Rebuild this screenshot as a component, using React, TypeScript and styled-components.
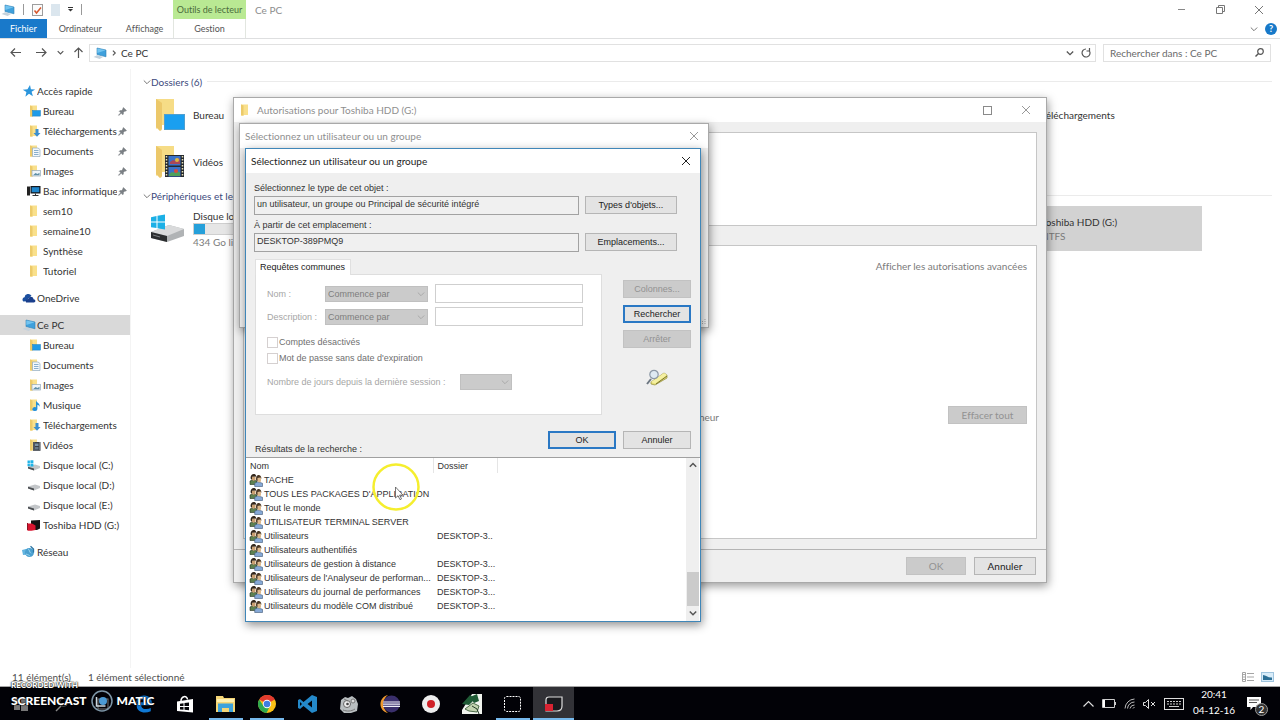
import React from "react";
import styled, { createGlobalStyle, css } from "styled-components";

const UI = `Lato, "Open Sans", sans-serif`;
const CLASSIC = `"Liberation Sans", Arial, sans-serif`;

const Global = createGlobalStyle`
  *, *::before, *::after { box-sizing: border-box; }
  body { margin: 0; background: #fff; color: #333; font: 10px/14px ${UI}; font-variant-ligatures: none; overflow: hidden; }
  button, input, select { font: inherit; font-variant-ligatures: none; color: inherit; margin: 0; padding: 0; border: 0; border-radius: 0; background: none; }
  a { color: inherit; text-decoration: none; }
  svg { display: block; flex: none; overflow: visible; }
`;

/* ---------- icons ---------- */

type IconProps = { size?: number };

const Svg = ({ w, h, vw, vh, children }: { w: number; h: number; vw?: number; vh?: number; children: React.ReactNode }) => (
  <svg width={w} height={h} viewBox={`0 0 ${vw ?? w} ${vh ?? h}`} fill="none" aria-hidden="true">
    {children}
  </svg>
);

const PcIcon = ({ size = 14 }: IconProps) => (
  <Svg w={size} h={size} vw={14} vh={14}>
    <path d="M4 2 13 4v6.800L4 8.600z" fill="#3fa0dc" stroke="#2f7fb4" strokeWidth=".6" />
    <path d="M4.300 2.500 12.600 4.300 4.300 7z" fill="#72c4f0" />
    <path d="M.5 11 4 9.300l6 1.800-3.400 1.800z" fill="#c5d2dc" />
  </Svg>
);

const Folder = ({ children, size = 14 }: IconProps & { children?: React.ReactNode }) => (
  <Svg w={size} h={size} vw={14} vh={14}>
    <path d="M2 1.500h7v10.500H4.500L2 13z" fill="#f9e08c" />
    <path d="M2 1.500 4.500 2.500V13L2 12z" fill="#ecca6a" />
    {children}
  </Svg>
);

const DesktopBadge = <rect x="4.500" y="6.500" width="8" height="5.600" fill="#1e9be8" stroke="#1b7fc0" strokeWidth=".5" />;
const DownBadge = <path d="M7.500 5h3v4h2L9 12.800 5.500 9h2z" fill="#3c8fd0" />;
const DocBadge = (
  <>
    <path d="M4.500 4h5.500l2 1.500v7h-7.500z" fill="#f3f8fc" stroke="#8fa9bd" strokeWidth=".7" />
    <path d="M6 6.500h4.500M6 8.500h4.500M6 10.500h4.500" stroke="#6d9cc2" strokeWidth=".8" />
  </>
);
const ImageBadge = (
  <>
    <rect x="4" y="6.500" width="8.500" height="5.500" fill="#eef5fa" stroke="#94a9b8" strokeWidth=".7" />
    <path d="m5 11.200 2.500-2.200 2 1 2-1.300v2.500z" fill="#5f8fa8" />
  </>
);
const MusicBadge = <path d="M8 2.500c.5 2 4.300 2.700 3.600 6.200-.5-1.300-1.500-1.900-2.200-2v4.300a2.500 2 0 1 1-1.400-1.800z" fill="#2690d8" />;
const VideoBadge = (
  <>
    <rect x="5" y="4" width="7.500" height="8.800" fill="#3a3f47" />
    <path d="M6 4.500v8M11.500 4.500v8" stroke="#c9ced4" strokeWidth=".7" strokeDasharray="1 1" />
    <rect x="7" y="5.500" width="3.500" height="2.500" fill="#7d93a8" />
    <rect x="7" y="9" width="3.500" height="2.500" fill="#68798a" />
  </>
);

const StarIcon = () => (
  <Svg w={14} h={14}>
    <path d="m8 1 .9 4.200 4.300.3-3.600 2.300 1.300 4.400-3.900-2.500-3.600 3 1-4.700L.8 5.800l4.700-.6z" fill="#2b95dc" />
  </Svg>
);
const CloudIcon = () => (
  <Svg w={14} h={14}>
    <path d="M1.300 10.500A2.400 2.400 0 0 1 2.500 6.300a3.800 3.800 0 0 1 7-1.500l-3 2.500-2 3z" fill="#1b4f9f" />
    <path d="M4 11.500c-.8-2.200.5-3.500 2.200-3.500.8-2.900 4.800-2.900 5.300.3 2.400.2 2.600 3.200.3 3.200z" fill="#1a3f8c" />
  </Svg>
);
const TerminalPcIcon = () => (
  <Svg w={14} h={14}>
    <path d="M-1 2.500h3v9h-3z" fill="#222" />
    <rect x="2.500" y="2" width="10" height="7.500" fill="#15191f" />
    <rect x="3.700" y="3.200" width="7.600" height="5" fill="#1f86cc" />
    <path d="M4.500 11.500h6M7.500 9.500v2" stroke="#333" />
  </Svg>
);
const DriveIcon = ({ win }: { win?: boolean }) => (
  <Svg w={14} h={14}>
    <path d="m0 8.500 7-2 5 1.500v2l-6 2.500-6-2z" fill="#c3c6c9" />
    <path d="M0 8.700 6 10.500v2l-6-2z" fill="#4b4f53" />
    {win && <path d="M-.5 2.600h2.400v2.600h-2.400zM2.400 2.300h3v2.900h-3zM-.5 5.700h2.400v2.500h-2.400zM2.400 5.700h3v2.800h-3z" fill="#20b4e8" />}
  </Svg>
);
const ToshibaIcon = () => (
  <Svg w={14} h={14}>
    <path d="M3 2.500 12 2v8.500L9 12H3z" fill="#141414" />
    <path d="M-.5 5.500h4.500l3.500 2v4.500l-4 .8h-4z" fill="#d7152f" />
    <path d="M-.500 5v7" stroke="#8d1322" />
  </Svg>
);
const NetworkIcon = () => (
  <Svg w={14} h={14}>
    <path d="M0 5 6 3.500l.7 6L1 10z" fill="#62b4e0" />
    <circle cx="7.500" cy="7.500" r="4.500" fill="#4a9fcf" />
    <path d="M6 3.800c2 1.500 1 3 3 4.500M4 9c1.800 1 3 .5 4 2.300" stroke="#9ad4ee" />
    <path d="m8.500 1.200 3 2.800v3.500" stroke="#2c75a3" strokeWidth="1.300" />
  </Svg>
);
const PinIcon = () => (
  <Svg w={9} h={9} vw={10} vh={10}>
    <path d="M6 .5 9.500 4l-1 .6-.8-.1-1.700 1.700.1 1.600-.9.900L3.500 7 1 9.500.5 9 3 6.500 1.300 4.800l.9-.9 1.600.1 1.700-1.700-.1-.8z" fill="#7b8085" stroke="#7b8085" strokeWidth=".5" />
  </Svg>
);
const BigFolder = ({ children }: { children?: React.ReactNode }) => (
  <Svg w={34} h={36}>
    <path d="M3 2h18v26H8l-5 4z" fill="#f6dc86" />
    <path d="m3 2 6 4v26l-2 2-4-4z" fill="#f1cf70" />
    <path d="m3 2 6 4v27l-2 1-4-4z" fill="#e7c263" opacity=".5" />
    {children}
  </Svg>
);
const BigDrive = ({ win }: { win?: boolean }) => (
  <Svg w={34} h={30}>
    <path d="m-2 18 18-7 15 4v7l-17 6-16-4z" fill="#b0b3b5" />
    <path d="m-2 18 18-7 15 4-17 7z" fill="#d9dadb" />
    <path d="m-2 18 16 4v6L-2 24z" fill="#2c2e30" />
    <path d="m0 21 7 2" stroke="#7b7f83" />
    {win && <path d="M-2 3.200 3.500 2v5.500H-2zM4.500 1.800 12 .5v7H4.500zM-2 8.500h5.500V14L-2 13.300zM4.500 8.500H12v7l-7.500-1.300z" fill="#1cb0e6" />}
  </Svg>
);
const Chevron = ({ dir = "down", size = 8, color = "#555", width = 1 }: { dir?: "down" | "up" | "right"; size?: number; color?: string; width?: number }) => (
  <Svg w={size} h={size} vw={8} vh={8}>
    <path d={dir === "down" ? "M.8 2.500 4 5.700l3.200-3.200" : dir === "up" ? "M.8 5.700 4 2.500l3.200 3.200" : "M2.500.8 5.700 4 2.500 7.200"} stroke={color} strokeWidth={width} />
  </Svg>
);
const CloseX = ({ color = "#999" }: { color?: string }) => (
  <Svg w={8} h={8}>
    <path d="m0 0 8 8M8 0 0 8" stroke={color} />
  </Svg>
);
const Square = ({ color = "#8a8a8a" }: { color?: string }) => (
  <Svg w={9} h={9}>
    <rect x=".5" y=".5" width="8" height="8" stroke={color} />
  </Svg>
);
const Arrow = ({ dir, color = "#555" }: { dir: "left" | "right" | "up"; color?: string }) => (
  <Svg w={11} h={11}>
    <path d={dir === "left" ? "M11 5.500H1M5 1.500l-4 4 4 4" : dir === "right" ? "M0 5.500h10M6 1.500l4 4-4 4" : "M5.500 11V1M1.500 5l4-4 4 4"} stroke={color} strokeWidth="1.200" />
  </Svg>
);
const GroupIcon = () => (
  <Svg w={13} h={14}>
    <path d="M0 11.500V8l2.500-1.200L7 8v3.500z" fill="#5d8050" stroke="#243020" strokeWidth=".6" />
    <path d="M1.500 3.500h4v3.300L3.500 8 1.500 6.500z" fill="#c99f70" />
    <path d="M.6 5.500C0-.3 6.600-.3 6.300 4L5.500 3.500 2 3.800v3z" fill="#33271c" />
    <path d="M4.700 13.500v-3.200l3-1.500 4.800 1.500v3.200z" fill="#86a9d6" stroke="#3f5877" strokeWidth=".6" />
    <path d="M7 4.500h4v4L9 9.500 7 8z" fill="#dcb88c" />
    <path d="M6.200 7.500C5 .5 11.700.5 11.400 6L10.500 4.500 7.500 5v3z" fill="#4a3622" />
  </Svg>
);
const SearchBookIcon = () => (
  <Svg w={24} h={18}>
    <path d="m6 14 13-9 3 2v3L10 17l-4-1z" fill="#e9e27a" stroke="#8f8a3a" strokeWidth=".7" />
    <path d="m6 14 13-9 3 2-12 8.500z" fill="#f5f0a2" />
    <path d="M11 16 22 8" stroke="#77722f" />
    <path d="m6 11-4 5" stroke="#6c7681" strokeWidth="2" />
    <circle cx="9" cy="6.500" r="4.200" fill="#dbe7f2" fillOpacity=".85" stroke="#8c98a6" strokeWidth="1.200" />
  </Svg>
);

/* ---------- explorer ---------- */

const Desktop = styled.div`
  position: relative;
  display: flex;
  flex-direction: column;
  height: 100vh;
  overflow: hidden;
`;
const Explorer = styled.main`
  flex: 1;
  min-height: 0;
  display: flex;
  flex-direction: column;
  border-bottom: 1px solid #a5a5a5;
`;
const Ribbon = styled.header`
  display: grid;
  grid-template-columns: 173px 73px 1fr;
  grid-template-rows: 19px 19px;
  border-bottom: 1px solid #dedfe0;
  font-size: 9px;
`;
const QuickAccess = styled.div`
  display: flex;
  align-items: center;
  gap: 8px;
  padding-left: 1px;
`;
const QuickSep = styled.span`
  width: 1px;
  height: 11px;
  background: #999;
`;
const ContextTab = styled.div`
  background: #b9e993;
  color: #4b6b3c;
  text-align: center;
  line-height: 19px;
`;
const TitleArea = styled.div`
  display: flex;
  align-items: center;
  justify-content: space-between;
  padding: 0 17px 0 9px;
  font-size: 10px;
  color: #8d8d8d;
`;
const Controls = styled.div`
  display: flex;
  align-items: center;
  gap: 30px;
`;
const IconButton = styled.button`
  display: grid;
  place-items: center;
  cursor: pointer;
`;
const Tabs = styled.div`
  display: flex;
`;
const Tab = styled.button<{ $file?: boolean; $context?: boolean }>`
  padding: 0 ${(p) => (p.$file ? 10 : p.$context ? 0 : 12)}px;
  line-height: 19px;
  color: ${(p) => (p.$file ? "#fff" : "#555")};
  background: ${(p) => (p.$file ? "#1979ca" : "none")};
  ${(p) => p.$context && css`border: solid #e2e6e0; border-width: 0 1px;`}
`;
const TabEnd = styled.div`
  display: flex;
  align-items: center;
  justify-content: flex-end;
  gap: 7px;
  padding-right: 3px;
`;
const Help = styled.button`
  width: 12px;
  height: 12px;
  border-radius: 50%;
  background: #1779c9;
  color: #fff;
  font-weight: bold;
  line-height: 12px;
`;
const AddressRow = styled.div`
  display: flex;
  align-items: center;
  padding: 0 9px 3px 10px;
  height: 30px;
`;
const NavButtons = styled.div`
  display: grid;
  grid-template-columns: 26px 21px 16px 16px;
  align-items: center;
  justify-items: start;
`;
const Address = styled.div`
  flex: 1;
  display: flex;
  align-items: center;
  gap: 4px;
  height: 18px;
  padding: 0 4px 0 3px;
  border: 1px solid #e1e1e1;
  margin-right: 7px;
`;
const Crumb = styled.button`
  flex: 1;
  text-align: left;
`;
const AddressTools = styled.div`
  display: flex;
  align-items: center;
  gap: 7px;
`;
const SearchBox = styled.label`
  display: flex;
  align-items: center;
  width: 168px;
  height: 18px;
  padding: 0 6px;
  border: 1px solid #e1e1e1;
  input { flex: 1; min-width: 0; outline: 0; }
  input::placeholder { color: #6a6a6a; opacity: 1; }
`;
const Columns = styled.div`
  flex: 1;
  display: flex;
  min-height: 0;
`;
const NavPane = styled.nav`
  width: 131px;
  padding-top: 12px;
  border-right: 1px solid #f4f4f4;
  display: flex;
  flex-direction: column;
  gap: 7px;
`;
const NavItem = styled.a<{ $level: number; $selected?: boolean }>`
  display: flex;
  align-items: center;
  gap: 1px;
  height: 20px;
  padding: 0 3px 0 ${(p) => (p.$level ? 28 : 22)}px;
  background: ${(p) => (p.$selected ? "#d9d9d9" : "none")};
  span { flex: 1; min-width: 0; overflow: hidden; white-space: nowrap; }
`;
const Content = styled.section`
  flex: 1;
  min-width: 0;
  padding: 4px 8px 0;
`;
const GroupHeader = styled.h2`
  display: flex;
  align-items: center;
  margin: 0;
  padding-left: 4px;
  height: 17px;
  font-size: 10px;
  font-weight: normal;
  color: #3c4a7c;
  &::after { content: ""; flex: 1; height: 1px; margin-left: 5px; background: #ebebeb; }
`;
const Tiles = styled.div<{ $drives?: boolean }>`
  display: grid;
  grid-template-columns: repeat(auto-fill, 204px);
  column-gap: 8px;
  padding: 0 11px;
  row-gap: 2px;
  margin: ${(p) => (p.$drives ? "2px 0 0" : "2px 0 3px")};
`;
const Tile = styled.a<{ $selected?: boolean }>`
  display: flex;
  align-items: center;
  gap: 6px;
  height: 45px;
  padding-left: 3px;
  background: ${(p) => (p.$selected ? "#d2d2d2" : "none")};
`;
const DriveInfo = styled.div`
  display: flex;
  flex-direction: column;
  small { font-size: 10px; color: #7b7b7b; }
`;
const Usage = styled.div`
  width: 150px;
  height: 12px;
  background: linear-gradient(to right, #26a0da 11px, #e6e6e6 11px);
  border: 1px solid #cfcfcf;
`;
const StatusBar = styled.footer`
  display: flex;
  align-items: center;
  gap: 17px;
  height: 18px;
  padding: 0 6px 0 12px;
  color: #4e4e4e;
`;
const Views = styled.div`
  display: flex;
  gap: 7px;
  margin-left: auto;
`;

/* ---------- taskbar ---------- */

const Taskbar = styled.footer`
  display: flex;
  height: 33px;
  background: #020207;
  color: #fff;
`;
const TaskButton = styled.button<{ $state?: "open" | "active" }>`
  display: grid;
  place-items: center;
  width: 41px;
  ${(p) => p.$state && css`background: linear-gradient(#76b9ed, #76b9ed) bottom / ${p.$state === "active" ? "41px" : "34px"} 2px no-repeat ${p.$state === "active" ? "#323237" : "transparent"};`}
`;
const Tray = styled.div`
  display: flex;
  align-items: center;
  gap: 8px;
  margin-left: auto;
  padding-right: 10px;
`;
const Clock = styled.time`
  width: 44px;
  margin-bottom: 4px;
  text-align: center;
  line-height: 16px;
`;
const Notifications = styled.button`
  position: relative;
  width: 26px;
  height: 33px;
  padding: 0 3px;
  display: grid;
  align-items: center;
`;
const Count = styled.span`
  position: absolute;
  right: 2px;
  bottom: 4px;
  width: 13px;
  height: 13px;
  border-radius: 50%;
  border: 1px solid #999;
  background: #333;
  line-height: 11px;
  text-align: center;
`;
const Watermark = styled.div`
  position: absolute;
  left: 11px;
  bottom: 7px;
  color: #fff;
  font-weight: 900;
  text-shadow: 0 0 2px #000, 0 0 1px #000;
  pointer-events: none;
`;
const WatermarkTop = styled.div`
  font-size: 8px;
  line-height: 8px;
`;
const WatermarkName = styled.div`
  display: flex;
  align-items: center;
  gap: 3px;
  font-size: 12px;
  line-height: 24px;
`;

/* ---------- dialogs ---------- */

const Dialog = styled.section<{ $x: number; $y: number; $w: number; $h: number; $active?: boolean }>`
  position: absolute;
  left: ${(p) => p.$x}px;
  top: ${(p) => p.$y}px;
  width: ${(p) => p.$w}px;
  height: ${(p) => p.$h}px;
  display: flex;
  flex-direction: column;
  background: #efefef;
  border: 1px solid ${(p) => (p.$active ? "#3f86b8" : "#a9a9a9")};
  box-shadow: 1px 3px 9px rgba(0, 0, 0, ${(p) => (p.$active ? 0.45 : 0.4)});
`;
const TitleBar = styled.header<{ $active?: boolean; $large?: boolean }>`
  display: flex;
  align-items: center;
  gap: 4px;
  height: 24px;
  padding: 0 ${(p) => (p.$large ? 16 : 10)}px 0 5px;
  background: #fff;
  color: ${(p) => (p.$active ? "#222" : "#8f8f8f")};
  h1 { flex: 1; margin: 0; font-size: 10px; font-weight: normal; }
`;
const PermTop = styled.div`
  height: 94px;
  margin: 10px 9px 0;
  background: #fff;
  border: 1px solid #c6c6c6;
`;
const PermPanel = styled.div`
  flex: 1;
  display: flex;
  flex-direction: column;
  justify-content: space-between;
  align-items: flex-end;
  margin: 19px 9px 10px;
  padding: 13px 9px 114px;
  background: #fff;
  border: 1px solid #c6c6c6;
`;
const PermLink = styled.a`
  color: #7b7b7b;
`;
const PermLine = styled.div`
  display: grid;
  grid-template-columns: 466px auto;
  align-items: end;
  justify-content: space-between;
  width: 100%;
  color: #7b7b7b;
  span { text-align: right; }
`;
const DialogFooter = styled.footer`
  display: flex;
  justify-content: flex-end;
  align-items: center;
  gap: 8px;
  height: 33px;
  padding: 0 10px;
  border-top: 1px solid #b4b4b4;
`;
const Button = styled.button<{ $w: number; $focus?: boolean }>`
  width: ${(p) => p.$w}px;
  height: 18px;
  background: #e3e3e3;
  border: ${(p) => (p.$focus ? "2px solid #2a78c4" : "1px solid #b5b5b5")};
  color: #222;
  &:disabled { background: #cbcbcb; border-color: #c2c2c2; color: #929292; }
`;
const Grip = styled.div`
  margin: auto 2px 2px auto;
`;
const Form = styled.form`
  flex: 1;
  display: flex;
  flex-direction: column;
  padding-top: 9px;
  font: 9px/12px ${CLASSIC};
  color: #333;
`;
const Target = styled.div`
  display: grid;
  grid-template-columns: 325px 92px;
  column-gap: 6px;
  margin: 0 0 4px 8px;
  label { grid-column: 1 / -1; height: 14px; line-height: 12px; }
`;
const ReadOnly = styled.input`
  height: 19px;
  padding: 0 2px 3px;
  border: 1px solid #a2a2a2;
  background: #f0f0f0;
`;
const Middle = styled.div`
  display: flex;
  align-items: flex-start;
  margin-top: 3px;
  padding: 0 9px;
  justify-content: space-between;
`;
const QueryTab = styled.div`
  width: 96px;
  height: 16px;
  margin-bottom: -1px;
  padding-left: 4px;
  line-height: 14px;
  background: #fff;
  border: 1px solid #e0e0e0;
  border-bottom: 0;
  position: relative;
  color: #222;
`;
const QueryPanel = styled.fieldset`
  display: flex;
  flex-direction: column;
  width: 347px;
  height: 141px;
  margin: 0;
  padding: 9px 11px 0;
  background: #fff;
  border: 1px solid #dedede;
  color: #a6a6a6;
`;
const QueryRow = styled.div`
  display: grid;
  grid-template-columns: 58px 110px 148px;
  align-items: center;
  height: 19px;
  margin-bottom: 4px;
`;
const SelectBox = styled.span<{ $w: number }>`
  position: relative;
  display: block;
  width: ${(p) => p.$w}px;
  select {
    appearance: none;
    display: block;
    width: 100%;
    height: 16px;
    padding: 0 2px;
    background: #cbcbcb;
    border: 1px solid #c0c0c0;
    color: #7d7d7d;
    opacity: 1;
  }
  svg { position: absolute; right: 3px; top: 4px; }
`;
const TextInput = styled.input`
  width: 148px;
  height: 19px;
  border: 1px solid #cfcfcf;
  background: #fff;
`;
const CheckRow = styled.label`
  display: flex;
  align-items: center;
  gap: 1px;
  height: 16px;
  color: #6f6f6f;
  input { appearance: none; width: 11px; height: 11px; border: 1px solid #d5d0d0; background: #fff; }
`;
const Checks = styled.div`
  margin-top: 4px;
`;
const SessionRow = styled.div`
  display: flex;
  align-items: center;
  justify-content: space-between;
  width: 245px;
  margin-top: 8px;
`;
const SideButtons = styled.div`
  display: flex;
  flex-direction: column;
  align-items: center;
  gap: 7px;
  padding-top: 21px;
`;
const SideArt = styled.div`
  padding-top: 13px;
`;
const Actions = styled.div`
  display: flex;
  justify-content: flex-end;
  gap: 7px;
  margin-top: 16px;
  padding: 0 9px;
`;
const ResultsLabel = styled.div`
  margin-top: -6px;
  padding: 0 9px;
  height: 14px;
  line-height: 12px;
`;
const Results = styled.div`
  flex: 1;
  display: flex;
  justify-content: space-between;
  background: #fff;
  border-top: 1px solid #a0a0a0;
`;
const Table = styled.table`
  table-layout: fixed;
  width: 251px;
  align-self: flex-start;
  border-collapse: collapse;
  th, td { height: 14px; padding: 0 4px; line-height: 14px; text-align: left; font-weight: normal; white-space: nowrap; overflow: hidden; }
  th { height: 15px; border-right: 1px solid #e5e5e5; }
  td { padding-right: 0; }
`;
const NameCell = styled.span`
  display: flex;
  align-items: center;
  gap: 1px;
  height: 14px;
`;
const Scrollbar = styled.div`
  display: flex;
  flex-direction: column;
  align-items: center;
  justify-content: space-between;
  width: 13px;
  margin-right: 1px;
  padding: 3px 0 4px;
  background: #efefef;
`;
const Thumb = styled.div`
  width: 12px;
  height: 34px;
  margin: auto 0 3px;
  background: #cbcbcb;
`;
const Pointer = styled.div`
  position: absolute;
  left: 372px;
  top: 463px;
  width: 48px;
  height: 48px;
  pointer-events: none;
`;

/* ---------- data ---------- */

type NavEntry = { label: string; icon: React.ReactNode; level?: number; pinned?: boolean; selected?: boolean };

const nav: NavEntry[][] = [
  [
    { label: "Accès rapide", icon: <StarIcon />, level: 0 },
    { label: "Bureau", icon: <Folder>{DesktopBadge}</Folder>, pinned: true },
    { label: "Téléchargements", icon: <Folder>{DownBadge}</Folder>, pinned: true },
    { label: "Documents", icon: <Folder>{DocBadge}</Folder>, pinned: true },
    { label: "Images", icon: <Folder>{ImageBadge}</Folder>, pinned: true },
    { label: "Bac informatique", icon: <TerminalPcIcon />, pinned: true },
    { label: "sem10", icon: <Folder /> },
    { label: "semaine10", icon: <Folder /> },
    { label: "Synthèse", icon: <Folder /> },
    { label: "Tutoriel", icon: <Folder /> },
  ],
  [{ label: "OneDrive", icon: <CloudIcon />, level: 0 }],
  [
    { label: "Ce PC", icon: <PcIcon />, level: 0, selected: true },
    { label: "Bureau", icon: <Folder>{DesktopBadge}</Folder> },
    { label: "Documents", icon: <Folder>{DocBadge}</Folder> },
    { label: "Images", icon: <Folder>{ImageBadge}</Folder> },
    { label: "Musique", icon: <Folder>{MusicBadge}</Folder> },
    { label: "Téléchargements", icon: <Folder>{DownBadge}</Folder> },
    { label: "Vidéos", icon: <Folder>{VideoBadge}</Folder> },
    { label: "Disque local (C:)", icon: <DriveIcon win /> },
    { label: "Disque local (D:)", icon: <DriveIcon /> },
    { label: "Disque local (E:)", icon: <DriveIcon /> },
    { label: "Toshiba HDD (G:)", icon: <ToshibaIcon /> },
  ],
  [{ label: "Réseau", icon: <NetworkIcon />, level: 0 }],
];

const results: [string, string][] = [
  ["TACHE", ""],
  ["TOUS LES PACKAGES D'APPLICATION", ""],
  ["Tout le monde", ""],
  ["UTILISATEUR TERMINAL SERVER", ""],
  ["Utilisateurs", "DESKTOP-3.."],
  ["Utilisateurs authentifiés", ""],
  ["Utilisateurs de gestion à distance", "DESKTOP-3..."],
  ["Utilisateurs de l'Analyseur de performan...", "DESKTOP-3..."],
  ["Utilisateurs du journal de performances", "DESKTOP-3..."],
  ["Utilisateurs du modèle COM distribué", "DESKTOP-3..."],
];

const folders: { label: string; art?: React.ReactNode }[] = [
  { label: "Bureau", art: <rect x="11.500" y="17.500" width="20" height="15" fill="#1a9ff0" stroke="#4f9fd0" /> },
  { label: "Documents" },
  { label: "Images" },
  { label: "Musique" },
  { label: "Téléchargements" },
  {
    label: "Vidéos",
    art: (
      <>
        <rect x="12" y="11" width="19" height="22" fill="#25292e" />
        <path d="M13.500 12v21M29.500 12v21" stroke="#e8e2b8" strokeWidth="1.500" strokeDasharray="1.500 1.500" />
        <rect x="15.500" y="12" width="12" height="9.500" fill="#3a72c8" />
        <rect x="15.500" y="23" width="12" height="9.500" fill="#3a72c8" />
        <path d="m17 18 3-2 3 1 3-3 1 3v3H17z" fill="#a8475a" />
        <circle cx="24" cy="16" r="2" fill="#e0b83c" />
        <path d="M16 31c3-5 5-1 7-3s3 1 4 0v4H16z" fill="#4fa05a" />
        <circle cx="23" cy="27" r="2" fill="#d84b3a" />
      </>
    ),
  },
];

const tasks: { name: string; state?: "open" | "active"; icon: React.ReactNode }[] = [
  { name: "Démarrer", icon: <Svg w={14} h={14}><path d="M0 2h6v5H0zM7 1h7v6H7zM0 8h6v5H0zM7 8h7v6H7z" fill="#777" /></Svg> },
  { name: "Rechercher", icon: <Svg w={14} h={14}><circle cx="8.500" cy="5.500" r="4" stroke="#555" /><path d="M6 9 1 14" stroke="#888" strokeWidth="1.500" /></Svg> },
  { name: "Vue des tâches", icon: <Svg w={14} h={14}><rect x="2" y="2" width="10" height="10" stroke="#777" /></Svg> },
  { name: "Edge", icon: <Svg w={18} h={18} vw={16} vh={16}><path d="M1 8C1 3 4 .5 8 .5c5 0 7.500 3.500 7 8.500H5.500c0 3.500 5 4.500 8.500 2.500v3C8 17 1.500 15 1.500 9.500 1.500 7 3 5 5.500 4 4.500 5 4.500 6 4.500 6.500h6.500C11 3 4 2.500 1 8z" fill="#0f78d4" /></Svg> },
  { name: "Store", icon: <Svg w={18} h={18}><path d="M1 6.500 17 4v13.500L1 16z" fill="#fff" /><path d="M5 6c0-5 6-6 6.500-1.500" stroke="#fff" strokeWidth="1.500" /><path d="M4 8.700 7.500 8.200v2.800H4zM8.500 8 13 7.400V11H8.500zM4 12h3.500v2.700L4 14.400zM8.500 12H13v3.200l-4.500-.4z" fill="#050508" /></Svg> },
  { name: "Explorateur", state: "open", icon: <Svg w={19} h={16}><path d="M0 0h7l1 2h11v14H0z" fill="#f5d677" /><path d="M1 3h17v3H1z" fill="#fff0b0" /><path d="M2 7.500h15V16h-4v-4H6v4H2z" fill="#3da2dc" /></Svg> },
  { name: "Chrome", state: "open", icon: <Svg w={18} h={18}><circle cx="9" cy="9" r="9" fill="#fbc116" /><path d="M9 9 1.200 4.500A9 9 0 0 1 16.800 4.500z" fill="#e33b2e" /><path d="M9 0a9 9 0 0 1 7.800 4.500H9z" fill="#e33b2e" /><path d="M1.200 4.500A9 9 0 0 0 8.500 18L12 11 5.500 11z" fill="#2da94f" /><circle cx="9" cy="9" r="4.200" fill="#fff" /><circle cx="9" cy="9" r="3.300" fill="#3e7de0" /></Svg> },
  { name: "Visual Studio Code", icon: <Svg w={19} h={18}><path fillRule="evenodd" d="M14 0l5 2v14l-5 2-8.500-7L2 14l-2-1V5l2-1 3.500 3zM14 5.500 9.500 9l4.500 3.500zM2 7v4l2-2z" fill="#2489ca" /></Svg> },
  { name: "Moteur", icon: <Svg w={20} h={18}><path d="M2 5 6 2l3 1 4-2 4 3 2 5-1 7-6 2H5l-4-4z" fill="#b9bec0" /><circle cx="8" cy="9" r="3.500" fill="#eee" stroke="#666" /><circle cx="14" cy="6" r="2" fill="#ddd" stroke="#777" /><path d="M4 15c4 1.500 8 1.500 12-1M5 4l4 2" stroke="#777" /><circle cx="8.500" cy="9" r="1.300" fill="#444" /></Svg> },
  { name: "Eclipse", icon: <Svg w={20} h={18}><path d="M8 0C-2 2-2 16 8 18 2 14 2 4 8 0z" fill="#f09a30" /><circle cx="11.500" cy="9" r="8.500" fill="#3a2f6b" /><path d="M3 7h17M3 9.200h17M3 11.400h17" stroke="#eeeef8" strokeWidth="1.200" /></Svg> },
  { name: "Enregistreur", icon: <Svg w={18} h={18}><circle cx="9" cy="9" r="9" fill="#ededed" /><circle cx="9" cy="9" r="4" fill="#cf2027" /></Svg> },
  { name: "Notepad", icon: <Svg w={20} h={20}><path d="M10 0h10v20H0v-4z" fill="#f1f4ee" /><path d="m0 10 8-9 5 4-6 6zM8 3l7-3 2 7-5 2z" fill="#1f5a35" /><path d="m3 15 8-6 6 3-2 6-8-1z" fill="#c2d4b0" stroke="#4c6a48" /><path d="m10 12 5 3 2 5" stroke="#263c28" /></Svg> },
  { name: "Capture", state: "open", icon: <Svg w={17} h={16}><rect x=".5" y=".5" width="16" height="15" rx="2" stroke="#fff" strokeDasharray="2 1" /></Svg> },
  { name: "Screencast-O-Matic", state: "active", icon: <Svg w={19} h={16}><path d="M5 1h13v9q0 5-5 5H2V4q0-3 3-3z" fill="#1b1b1f" stroke="#ddd" strokeWidth="1.200" /><rect x="1" y="8" width="8" height="7" fill="#d92332" /></Svg> },
];

/* ---------- views ---------- */

const ExplorerWindow = () => (
  <Explorer>
    <Ribbon>
      <QuickAccess>
        <PcIcon />
        <QuickSep />
        <Svg w={11} h={12}><rect x=".5" y=".5" width="10" height="11" fill="#fbfbfb" stroke="#9d9d9d" /><path d="m2.500 6.500 2 2.500L9 3.500" stroke="#d8582d" strokeWidth="1.500" /></Svg>
        <Svg w={9} h={12}><rect width="9" height="12" fill="#dbe6ee" /></Svg>
        <Svg w={5} h={5}><path d="M0 .5h5" stroke="#333" /><path d="M0 2h5L2.500 4.500z" fill="#333" /></Svg>
        <QuickSep />
      </QuickAccess>
      <ContextTab>Outils de lecteur</ContextTab>
      <TitleArea>
        <span>Ce PC</span>
        <Controls>
          <IconButton aria-label="Réduire"><Svg w={9} h={9}><path d="M1 4.500h7" stroke="#888" /></Svg></IconButton>
          <IconButton aria-label="Agrandir"><Svg w={9} h={9}><path d="M.5 2.500h6v6h-6zM2.500 2.500v-2h6v6h-2" stroke="#777" /></Svg></IconButton>
          <IconButton aria-label="Fermer"><CloseX color="#777" /></IconButton>
        </Controls>
      </TitleArea>
      <Tabs>
        <Tab $file>Fichier</Tab>
        <Tab>Ordinateur</Tab>
        <Tab>Affichage</Tab>
      </Tabs>
      <Tab $context>Gestion</Tab>
      <TabEnd>
        <IconButton aria-label="Développer le ruban"><Chevron color="#777" /></IconButton>
        <Help aria-label="Aide">?</Help>
      </TabEnd>
    </Ribbon>
    <AddressRow>
      <NavButtons>
        <IconButton aria-label="Précédent"><Arrow dir="left" /></IconButton>
        <IconButton aria-label="Suivant"><Arrow dir="right" /></IconButton>
        <IconButton aria-label="Récents"><Chevron size={7} width={1.3} /></IconButton>
        <IconButton aria-label="Dossier parent"><Arrow dir="up" /></IconButton>
      </NavButtons>
      <Address>
        <PcIcon />
        <Chevron dir="right" size={6} width={1.5} />
        <Crumb>Ce PC</Crumb>
        <AddressTools>
          <IconButton aria-label="Historique"><Chevron width={1.3} /></IconButton>
          <IconButton aria-label="Actualiser"><Svg w={10} h={10}><path d="M8.500 3A4 4 0 1 1 5 1M8.500 0v3h-3" stroke="#555" strokeWidth="1.200" /></Svg></IconButton>
        </AddressTools>
      </Address>
      <SearchBox>
        <input aria-label="Rechercher" placeholder="Rechercher dans : Ce PC" />
        <Svg w={9} h={9}><circle cx="5.500" cy="3.500" r="2.800" stroke="#555" strokeWidth="1.200" /><path d="M3.500 5.500.5 8.500" stroke="#555" strokeWidth="1.500" /></Svg>
      </SearchBox>
    </AddressRow>
    <Columns>
      <NavPane aria-label="Volet de navigation">
        {nav.map((group, i) => (
          <div key={i}>
            {group.map((n) => (
              <NavItem key={n.label} href="#" $level={n.level ?? 1} $selected={n.selected}>
                {n.icon}
                <span>{n.label}</span>
                {n.pinned && <PinIcon />}
              </NavItem>
            ))}
          </div>
        ))}
      </NavPane>
      <Content>
        <GroupHeader><Chevron color="#777" />Dossiers (6)</GroupHeader>
        <Tiles>
          {folders.map((f) => (
            <Tile key={f.label} href="#"><BigFolder>{f.art}</BigFolder>{f.label}</Tile>
          ))}
        </Tiles>
        <GroupHeader><Chevron color="#777" />Périphériques et lecteurs (5)</GroupHeader>
        <Tiles $drives>
          <Tile href="#">
            <BigDrive win />
            <DriveInfo>Disque local<Usage /><small>434 Go libres</small></DriveInfo>
          </Tile>
          {["D", "E", "F"].map((d) => (
            <Tile key={d} href="#" aria-label={`Disque local (${d}:)`}>
              <BigDrive />
              <Usage />
            </Tile>
          ))}
          <Tile href="#" $selected>
            <BigDrive />
            <DriveInfo>Toshiba HDD (G:)<small>NTFS</small></DriveInfo>
          </Tile>
        </Tiles>
      </Content>
    </Columns>
    <StatusBar>
      <span>11 élément(s)</span>
      <span>1 élément sélectionné</span>
      <Views>
        <IconButton aria-label="Détails"><Svg w={12} h={10}><path d="M.5.500h3v9h-3zM5 1.500h7M5 5h7M5 8.500h7" stroke="#a5a5a5" /><path d="M1.500 2.500h1M1.500 5h1M1.500 7.500h1" stroke="#555" /></Svg></IconButton>
        <IconButton aria-label="Grandes icônes"><Svg w={13} h={10}><rect x=".5" y=".5" width="12" height="9" fill="#d8ecf9" stroke="#9fc4de" /><path d="M2 3c3 0 5 3 9 2.500V8H2z" fill="#2c6f96" /></Svg></IconButton>
      </Views>
    </StatusBar>
  </Explorer>
);

const PermissionsDialog = () => (
  <Dialog $x={233} $y={97} $w={814} $h={486} aria-label="Autorisations">
    <TitleBar $large>
      <Folder />
      <h1>Autorisations pour Toshiba HDD (G:)</h1>
      <Controls>
        <IconButton aria-label="Agrandir"><Square /></IconButton>
        <IconButton aria-label="Fermer"><CloseX /></IconButton>
      </Controls>
    </TitleBar>
    <PermTop />
    <PermPanel>
      <PermLink href="#">Afficher les autorisations avancées</PermLink>
      <PermLine>
        <span>conteneur</span>
        <Button $w={79} disabled>Effacer tout</Button>
      </PermLine>
    </PermPanel>
    <DialogFooter>
      <Button $w={60} disabled>OK</Button>
      <Button $w={62}>Annuler</Button>
    </DialogFooter>
  </Dialog>
);

const ParentDialog = () => (
  <Dialog $x={239} $y={123} $w={470} $h={205} aria-label="Sélection">
    <TitleBar>
      <h1>Sélectionnez un utilisateur ou un groupe</h1>
      <IconButton aria-label="Fermer"><CloseX /></IconButton>
    </TitleBar>
    <Grip><Svg w={6} h={6}><path d="M5 0v6M2.500 2v4M0 4.500v1.500" stroke="#aaa" strokeDasharray="1 1" /></Svg></Grip>
  </Dialog>
);

const PickerDialog = () => (
  <Dialog $x={245} $y={148} $w={456} $h={474} $active aria-label="Recherche">
    <TitleBar $active>
      <h1>Sélectionnez un utilisateur ou un groupe</h1>
      <IconButton aria-label="Fermer"><CloseX color="#222" /></IconButton>
    </TitleBar>
    <Form onSubmit={(e) => e.preventDefault()}>
      <Target>
        <label htmlFor="type">Sélectionnez le type de cet objet :</label>
        <ReadOnly id="type" readOnly value="un utilisateur, un groupe ou Principal de sécurité intégré" />
        <Button type="button" $w={92}>Types d'objets...</Button>
      </Target>
      <Target>
        <label htmlFor="from">À partir de cet emplacement :</label>
        <ReadOnly id="from" readOnly value="DESKTOP-389PMQ9" />
        <Button type="button" $w={92}>Emplacements...</Button>
      </Target>
      <Middle>
        <div>
          <QueryTab>Requêtes communes</QueryTab>
          <QueryPanel>
            <QueryRow>
              <label htmlFor="name">Nom :</label>
              <SelectBox $w={103}><select aria-label="Condition du nom" disabled><option>Commence par</option></select><Chevron color="#aaa" /></SelectBox>
              <TextInput id="name" disabled />
            </QueryRow>
            <QueryRow>
              <label htmlFor="desc">Description :</label>
              <SelectBox $w={103}><select aria-label="Condition de la description" disabled><option>Commence par</option></select><Chevron color="#aaa" /></SelectBox>
              <TextInput id="desc" disabled />
            </QueryRow>
            <Checks>
              <CheckRow><input type="checkbox" disabled />Comptes désactivés</CheckRow>
              <CheckRow><input type="checkbox" disabled />Mot de passe sans date d'expiration</CheckRow>
            </Checks>
            <SessionRow>
              <label htmlFor="days">Nombre de jours depuis la dernière session :</label>
              <SelectBox $w={52}><select id="days" disabled /><Chevron color="#aaa" /></SelectBox>
            </SessionRow>
          </QueryPanel>
        </div>
        <SideButtons>
          <Button type="button" $w={68} disabled>Colonnes...</Button>
          <Button type="button" $w={68} $focus>Rechercher</Button>
          <Button type="button" $w={68} disabled>Arrêter</Button>
          <SideArt><SearchBookIcon /></SideArt>
        </SideButtons>
      </Middle>
      <Actions>
        <Button $w={68} $focus>OK</Button>
        <Button type="button" $w={68}>Annuler</Button>
      </Actions>
      <ResultsLabel>Résultats de la recherche :</ResultsLabel>
      <Results>
        <Table>
          <colgroup><col width="187" /><col width="64" /></colgroup>
          <thead><tr><th>Nom</th><th>Dossier</th></tr></thead>
          <tbody>
            {results.map(([name, place]) => (
              <tr key={name}><td><NameCell><GroupIcon />{name}</NameCell></td><td>{place}</td></tr>
            ))}
          </tbody>
        </Table>
        <Scrollbar>
          <Chevron dir="up" width={1.5} />
          <Thumb />
          <Chevron width={1.5} />
        </Scrollbar>
      </Results>
    </Form>
  </Dialog>
);

export default function App() {
  return (
    <>
      <Global />
      <Desktop>
        <ExplorerWindow />
        <PermissionsDialog />
        <ParentDialog />
        <PickerDialog />
        <Pointer>
          <Svg w={48} h={48}>
            <circle cx="24" cy="24" r="22.500" stroke="#f5ee2e" strokeWidth="2.500" />
            <path d="M23.500 24v11l2.500-2.300 2 4 1.500-.8-1.900-3.800h3.400z" fill="#fff" stroke="#555" strokeWidth=".8" />
          </Svg>
        </Pointer>
        <Taskbar>
          {tasks.map((t) => (
            <TaskButton key={t.name} aria-label={t.name} $state={t.state}>{t.icon}</TaskButton>
          ))}
          <Tray>
            <Svg w={11} h={8}><path d="m.5 6.500 5-5 5 5" stroke="#ddd" strokeWidth="1.200" /></Svg>
            <Svg w={14} h={9}><path d="M.5.500h12v8H.5z" stroke="#ccc" /><path d="M13.500 3v3" stroke="#ccc" /><path d="M1 1h2v7H1z" fill="#fff" /></Svg>
            <Svg w={11} h={11}><path d="M1 10.500A10 10 0 0 1 10.500 1M3.500 10.500a7 7 0 0 1 7-6.500M6 10.500A4.500 4.500 0 0 1 10.500 7M9 10.500 10.500 9" stroke="#bbb" /></Svg>
            <Svg w={13} h={10}><path d="M.5 3.500h2l3-3v9l-3-3h-2zM8 3l4 4M12 3 8 7" stroke="#ddd" /></Svg>
            <Svg w={20} h={12}><rect x=".5" y=".5" width="19" height="11" stroke="#ddd" /><path d="M3 3.500h14M3 6h14" stroke="#ccc" strokeDasharray="2 1" /><path d="M5 8.500h10" stroke="#ccc" /></Svg>
            <Clock>20:41<br />04-12-16</Clock>
            <Notifications aria-label="Notifications">
              <Svg w={14} h={13}><path d="M0 0h14v10H6l-2.500 3v-3H0z" fill="#fff" /><path d="M2 3h10M2 5.500h8" stroke="#555" /></Svg>
              <Count>2</Count>
            </Notifications>
          </Tray>
        </Taskbar>
        <Watermark>
          <WatermarkTop>RECORDED WITH</WatermarkTop>
          <WatermarkName>
            SCREENCAST
            <Svg w={24} h={24}><circle cx="12" cy="12" r="10" stroke="#7e97a8" strokeWidth="1.500" /><circle cx="13" cy="12" r="4" fill="#4b9ad4" /><path d="M6.500 8v9h9" stroke="#ccd8e0" strokeWidth="1.500" /></Svg>
            MATIC
          </WatermarkName>
        </Watermark>
      </Desktop>
    </>
  );
}
